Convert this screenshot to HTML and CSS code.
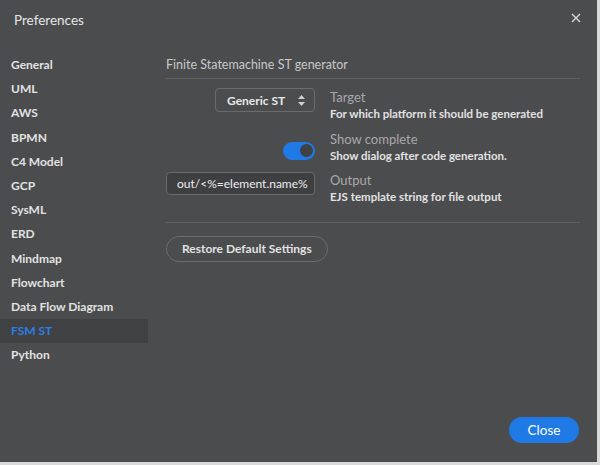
FILE: index.html
```html
<!DOCTYPE html>
<html>
<head>
<meta charset="utf-8">
<link rel="stylesheet" href="styles.css">
</head>
<body>
<div class="dialog">
  <div class="titlebar">
    <span class="title">Preferences</span>
    <span class="close-x">
      <svg width="10" height="10" viewBox="0 0 10 10"><path d="M1 1L9 9M9 1L1 9" stroke="#d8d8d8" stroke-width="1.4"/></svg>
    </span>
  </div>
  <div class="body">
    <ul class="nav">
      <li>General</li>
      <li>UML</li>
      <li>AWS</li>
      <li>BPMN</li>
      <li>C4 Model</li>
      <li>GCP</li>
      <li>SysML</li>
      <li>ERD</li>
      <li>Mindmap</li>
      <li>Flowchart</li>
      <li>Data Flow Diagram</li>
      <li class="active">FSM ST</li>
      <li>Python</li>
    </ul>
    <div class="content">
      <div class="section-title">Finite Statemachine ST generator</div>
      <div class="rows">
        <div class="row">
          <div class="control">
            <div class="select">
              <span>Generic ST</span>
              <svg width="9" height="13" viewBox="0 0 9 13"><path d="M4.5 1L8 5H1Z M4.5 12L1 8H8Z" fill="#cfcfcf"/></svg>
            </div>
          </div>
          <div class="desc">
            <div class="label">Target</div>
            <div class="help">For which platform it should be generated</div>
          </div>
        </div>
        <div class="row">
          <div class="control">
            <div class="toggle"><span class="knob"></span></div>
          </div>
          <div class="desc">
            <div class="label">Show complete</div>
            <div class="help">Show dialog after code generation.</div>
          </div>
        </div>
        <div class="row">
          <div class="control">
            <div class="input">out/&lt;%=element.name%</div>
          </div>
          <div class="desc">
            <div class="label">Output</div>
            <div class="help">EJS template string for file output</div>
          </div>
        </div>
      </div>
      <div class="footer-sep"></div>
      <button class="restore">Restore Default Settings</button>
    </div>
  </div>
  <div class="actions">
    <button class="btn-close">Close</button>
  </div>
</div>
</body>
</html>
```
FILE: styles.css
```css
html, body {
  margin: 0;
  padding: 0;
  background: #d9d9d9;
}
body {
  width: 600px;
  height: 465px;
  font-family: "Lato", "Open Sans", sans-serif;
}
.dialog {
  width: 597px;
  height: 462px;
  background: #4b4c4e;
  display: flex;
  flex-direction: column;
  color: #e4e4e4;
}
.titlebar {
  display: flex;
  justify-content: space-between;
  align-items: center;
  padding: 9px 16px 0 14px;
  height: 22px;
}
.title {
  font-size: 13.5px;
  color: #e6e6e6;
}
.close-x {
  display: flex;
  margin-top: -4px;
}
.body {
  display: flex;
  flex: 1;
  padding-top: 22px;
}
.nav {
  list-style: none;
  margin: 0;
  padding: 0;
  width: 148px;
}
.nav li {
  height: 24.2px;
  line-height: 24px;
  padding-left: 11px;
  font-size: 12px;
  font-weight: 700;
  color: #e2e2e2;
}
.nav li.active {
  background: #404143;
  color: #2a7fe6;
}
.content {
  flex: 1;
  padding: 1px 17px 0 18px;
}
.section-title {
  font-size: 12.5px;
  color: #c8c8c8;
  height: 24px;
  line-height: 22px;
  border-bottom: 1px solid #5f6062;
}
.rows {
  padding-top: 9px;
}
.row {
  display: flex;
  height: 41.5px;
}
.control {
  width: 149px;
  display: flex;
  justify-content: flex-end;
  align-items: flex-start;
  flex-shrink: 0;
}
.desc {
  padding-left: 15px;
  margin-top: 1px;
}
.label {
  font-size: 13px;
  color: #a9a9a9;
  line-height: 17px;
}
.help {
  font-size: 11.5px;
  font-weight: 700;
  color: #e2e2e2;
  line-height: 16px;
}
.select {
  box-sizing: border-box;
  width: 100px;
  height: 24px;
  border: 1px solid #6a6b6d;
  border-radius: 4px;
  display: flex;
  align-items: center;
  justify-content: space-between;
  padding: 0 8px 0 11px;
  font-size: 12px;
  font-weight: 700;
  color: #e8e8e8;
}
.toggle {
  margin-top: 12px;
  width: 32px;
  height: 18px;
  border-radius: 9px;
  background: #1f7ae6;
  display: flex;
  justify-content: flex-end;
  align-items: center;
  padding-right: 2px;
  box-sizing: border-box;
}
.knob {
  width: 13px;
  height: 13px;
  border-radius: 50%;
  background: #404143;
}
.input {
  margin-top: 1px;
  width: 149px;
  height: 23px;
  box-sizing: border-box;
  border: 1px solid #6a6b6d;
  border-radius: 4px;
  background: #3e3f41;
  font-size: 12px;
  color: #ececec;
  line-height: 21px;
  padding-left: 10px;
  white-space: nowrap;
}
.footer-sep {
  margin-top: 9px;
  border-top: 1px solid #5f6062;
}
.restore {
  margin-top: 13px;
  height: 26px;
  padding: 0 15px;
  border: 1px solid #6a6b6d;
  border-radius: 13px;
  background: transparent;
  color: #e2e2e2;
  font-family: inherit;
  font-size: 12px;
  font-weight: 700;
}
.actions {
  display: flex;
  justify-content: flex-end;
  padding: 0 18px 19px 0;
}
.btn-close {
  width: 70px;
  height: 26px;
  border: none;
  border-radius: 13px;
  background: #1f7ae6;
  color: #ffffff;
  font-family: inherit;
  font-size: 13.5px;
}
```
